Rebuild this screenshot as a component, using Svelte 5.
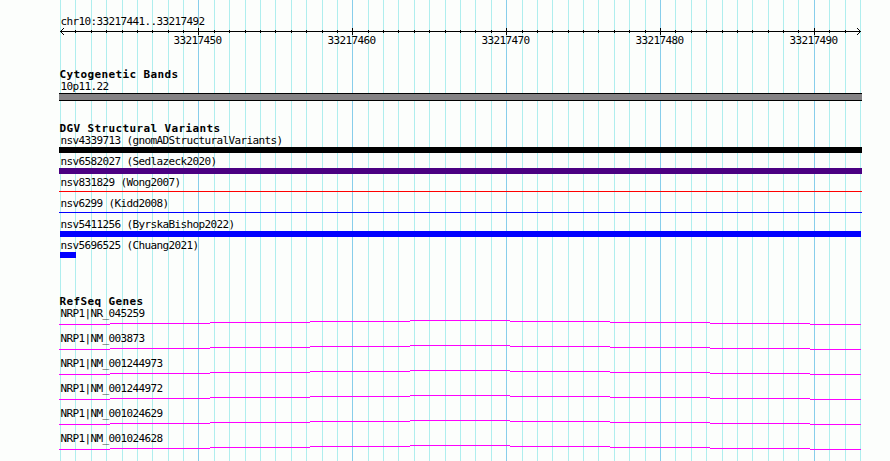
<script>
  const start = 33217441;
  const end = 33217492;
  const ticks = Array.from({ length: end - start + 2 }, (_, i) => ({
    x: Math.round(60 + (i * 800) / 52),
    pos: start + i,
    major: (start + i) % 10 === 0
  }));
  const majors = ticks.filter((t) => t.major);

  const variants = [
    { name: 'nsv4339713 (gnomADStructuralVariants)', kind: 'black wide' },
    { name: 'nsv6582027 (Sedlazeck2020)', kind: 'indigo wide' },
    { name: 'nsv831829 (Wong2007)', kind: 'red wide thin' },
    { name: 'nsv6299 (Kidd2008)', kind: 'blue wide thin' },
    { name: 'nsv5411256 (ByrskaBishop2022)', kind: 'blue full' },
    { name: 'nsv5696525 (Chuang2021)', kind: 'blue short' }
  ];

  const genes = ['NR_045259', 'NM_003873', 'NM_001244973', 'NM_001244972', 'NM_001024629', 'NM_001024628'];

  const edges = [59, 110, 210, 310, 410, 510, 610, 710, 810, 861];
  const heights = [4, 3, 2, 1, 0, 1, 2, 3, 4];
</script>

<main>
  <svg class="grid" width="890" height="461" shape-rendering="crispEdges">
    {#each ticks as t}
      <rect x={t.x} y="0" width="1" height="461" class:major={t.major} />
    {/each}
  </svg>

  <header>
    <div class="label">chr10:{start}..{end}</div>
    <svg class="axis" width="890" height="9" shape-rendering="crispEdges">
      <rect x="60" y="4" width="801" height="1" />
      {#each ticks.slice(1, -1) as t}
        <rect x={t.x} y={t.major ? 1 : 3} width="1" height={t.major ? 7 : 3} />
      {/each}
      <path d="M61 3h1v1h-1zM62 2h1v1h-1zM63 1h1v1h-1zM61 5h1v1h-1zM62 6h1v1h-1zM63 7h1v1h-1z" />
      <path d="M859 3h1v1h-1zM858 2h1v1h-1zM857 1h1v1h-1zM859 5h1v1h-1zM858 6h1v1h-1zM857 7h1v1h-1z" />
    </svg>
    <div class="numbers">
      {#each majors as t}<span>{t.pos}</span>{/each}
    </div>
  </header>

  <section class="bands">
    <h2>Cytogenetic Bands</h2>
    <div class="label">10p11.22</div>
    <div class="band"></div>
  </section>

  <section class="dgv">
    <h2>DGV Structural Variants</h2>
    {#each variants as v}
      <div class="variant">
        <div class="label">{v.name}</div>
        <div class="bar {v.kind}"></div>
      </div>
    {/each}
  </section>

  <section class="refseq">
    <h2>RefSeq Genes</h2>
    {#each genes as g}
      <div class="gene">
        <div class="label">NRP1|{g}</div>
        <svg width="890" height="5" shape-rendering="crispEdges">
          {#each heights as h, i}
            <rect x={edges[i]} y={h} width={edges[i + 1] - edges[i]} height="1" />
          {/each}
        </svg>
      </div>
    {/each}
  </section>
</main>

<style>
  :global(body) { margin: 0; background: #fcfefc; }
  main {
    position: relative;
    box-sizing: border-box;
    width: 890px;
    height: 461px;
    padding-top: 15px;
    overflow: hidden;
    background: #fcfefc;
    color: #000;
    font: 11px/14px "DejaVu Sans Mono", monospace;
    letter-spacing: -0.622px;
    white-space: nowrap;
  }
  svg { display: block; }
  .grid { position: absolute; left: 0; top: 0; fill: #afeeee; }
  .grid .major { fill: #87ceeb; }
  header, section { position: relative; }
  header { height: 53px; }
  .label { height: 12px; padding-left: 60.4px; }
  .axis { fill: #000; }
  .numbers { display: flex; gap: 106px; padding-left: 173.5px; margin-top: -2px; }
  .numbers span { width: 48px; }
  h2 {
    margin: 0;
    height: 12px;
    padding-left: 59.4px;
    font: bold 11px/14px "DejaVu Sans Mono", monospace;
    letter-spacing: 0.378px;
  }
  .bands { height: 54px; }
  .band {
    box-sizing: border-box;
    width: 803px;
    height: 8px;
    margin: 1px 0 0 59px;
    background: #848284;
    border: solid #000;
    border-width: 1px 0;
  }
  .dgv { height: 173px; }
  .variant { height: 21px; }
  .bar { height: 6px; margin: 1px 0 0 60px; }
  .wide { width: 803px; margin-left: 59px; }
  .full { width: 801px; }
  .short { width: 16px; }
  .thin { height: 1px; margin-top: 3px; }
  .black { background: #000; }
  .indigo { background: #4b0082; }
  .red { background: #f00; }
  .blue { background: #00f; }
  .gene { height: 25px; }
  .gene svg { margin-top: 1px; fill: #f0f; }
</style>
